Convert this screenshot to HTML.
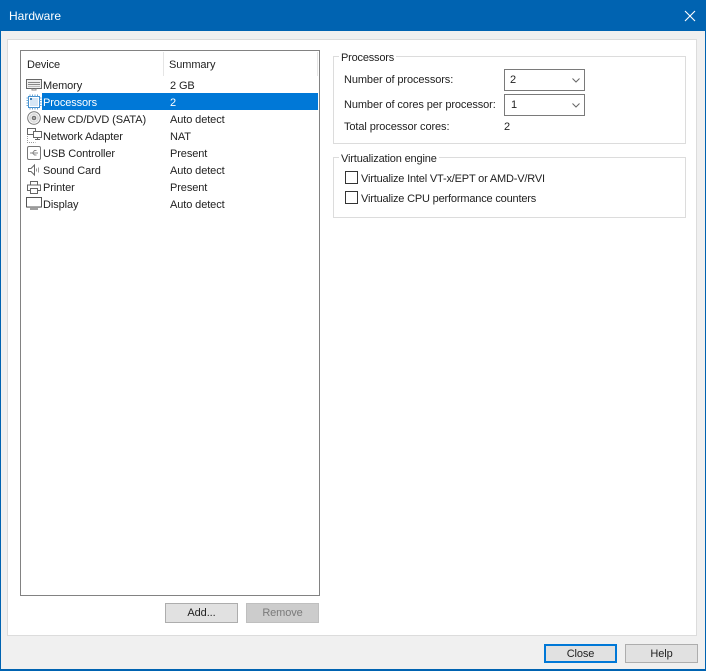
<!DOCTYPE html>
<html><head><meta charset="utf-8"><style>
html,body{margin:0;padding:0}
body{width:706px;height:671px;position:relative;overflow:hidden;background:#f0f0f0;font-family:"Liberation Sans",sans-serif;font-size:11px;letter-spacing:-.1px;color:#222}
.a,.t{position:absolute}
.t{white-space:nowrap;line-height:14px;margin-top:1px}
.b{position:absolute;box-sizing:border-box;background:#e1e1e1;border:1px solid #adadad;text-align:center;line-height:19px;height:20px;width:73px}
.g{position:absolute;box-sizing:border-box;border:1px solid #dcdcdc;left:333px;width:353px}
.c{position:absolute;box-sizing:border-box;left:504px;width:81px;height:22px;border:1px solid #7a7a7a;background:#fff}
.k{position:absolute;box-sizing:border-box;left:345px;width:13px;height:13px;border:1px solid #333;background:#fff}
svg{position:absolute;overflow:visible}
</style></head><body>
<div class="a" style="left:0;top:0;width:706px;height:671px;box-sizing:border-box;border:1px solid #0063b1;border-width:0 1px 2px 1px"></div>
<div class="a" style="left:0;top:0;width:706px;height:31px;background:#0063b1"></div>
<div class="t" style="left:9px;top:8px;color:#fff;font-size:12px;letter-spacing:0">Hardware</div>
<svg style="left:684px;top:10px" width="12" height="12"><path d="M1 1L11 11M11 1L1 11" stroke="#fff" stroke-width="1.1" fill="none"/></svg>

<div class="a" style="left:7px;top:39px;width:690px;height:597px;box-sizing:border-box;background:#fff;border:1px solid #dcdcdc"></div>
<div class="a" style="left:20px;top:50px;width:300px;height:546px;box-sizing:border-box;background:#fff;border:1px solid #828282"></div>
<div class="a" style="left:163px;top:52px;width:1px;height:24px;background:#e5e5e5"></div>
<div class="a" style="left:317px;top:52px;width:1px;height:24px;background:#e5e5e5"></div>
<div class="t" style="left:27px;top:57px">Device</div>
<div class="t" style="left:169px;top:57px">Summary</div>

<div class="a" style="left:42px;top:93px;width:276px;height:17px;background:#0078d7"></div>

<div class="t" style="left:43px;top:78px">Memory</div><div class="t" style="left:170px;top:78px">2 GB</div>
<div class="t" style="left:43px;top:95px;color:#fff">Processors</div><div class="t" style="left:170px;top:95px;color:#fff">2</div>
<div class="t" style="left:43px;top:112px">New CD/DVD (SATA)</div><div class="t" style="left:170px;top:112px">Auto detect</div>
<div class="t" style="left:43px;top:129px">Network Adapter</div><div class="t" style="left:170px;top:129px">NAT</div>
<div class="t" style="left:43px;top:146px">USB Controller</div><div class="t" style="left:170px;top:146px">Present</div>
<div class="t" style="left:43px;top:163px">Sound Card</div><div class="t" style="left:170px;top:163px">Auto detect</div>
<div class="t" style="left:43px;top:180px">Printer</div><div class="t" style="left:170px;top:180px">Present</div>
<div class="t" style="left:43px;top:197px">Display</div><div class="t" style="left:170px;top:197px">Auto detect</div>

<!-- Memory -->
<svg style="left:26px;top:79px" width="16" height="12" fill="none" stroke="#666"><rect x=".5" y=".5" width="15" height="9" fill="#eee"/><path d="M2 3.5h12M2 5.5h12" stroke="#888"/><path d="M2 7.5h12" stroke="#bbb"/><path d="M6 9.5v1.5h4v-1.5" stroke="#888"/></svg>
<!-- Processor -->
<svg style="left:26px;top:94px" width="16" height="16" fill="none"><rect x="2.5" y="2.5" width="11" height="11" fill="#fff" stroke="#3f8fd0"/><rect x="4" y="4" width="8" height="8" fill="#d5e6f5"/><rect x="4" y="4" width="2" height="2" fill="#3f7fb5"/><path d="M4 .5v2M6.5 .5v2M9 .5v2M11.5 .5v2M4 13.5v2M6.5 13.5v2M9 13.5v2M11.5 13.5v2M.5 4h2M.5 6.5h2M.5 9h2M.5 11.5h2M13.5 4h2M13.5 6.5h2M13.5 9h2M13.5 11.5h2" stroke="#6aa5d5"/></svg>
<!-- CD -->
<svg style="left:27px;top:111px" width="14" height="14" fill="none" stroke="#777"><circle cx="7" cy="7" r="6.3"/><circle cx="7" cy="7" r="4" stroke="#ddd" stroke-width="2"/><circle cx="7" cy="7" r="1.8" fill="#aaa" stroke="#666"/></svg>
<!-- Network -->
<svg style="left:27px;top:128px" width="15" height="15" fill="none" stroke="#666"><rect x=".5" y=".5" width="8" height="6"/><rect x="6.5" y="3.5" width="8" height="6" fill="#fff"/><path d="M10.5 9.5v2M8 11.5h5"/><path d="M.5 8v6.5h8" stroke="#999" stroke-dasharray="1 1"/></svg>
<!-- USB -->
<svg style="left:27px;top:146px" width="14" height="14" fill="none" stroke="#777"><rect x=".5" y=".5" width="13" height="13" rx="1.5"/><path d="M3 7h8M5.5 7l2-2.5h2M5.5 7l2 2h2" stroke="#888"/></svg>
<!-- Sound -->
<svg style="left:28px;top:164px" width="13" height="12" fill="none" stroke="#666"><path d="M.5 4.5v3h2.5l3.5 3.5V1L3 4.5z"/><path d="M8.5 4.5v3M10.5 3.5v5" stroke="#999"/></svg>
<!-- Printer -->
<svg style="left:27px;top:181px" width="14" height="13" fill="none" stroke="#666"><rect x="3.5" y=".5" width="7" height="3.5"/><path d="M3 9.5H.5v-5.5h13v5.5H11"/><rect x="3.5" y="7.5" width="7" height="5"/></svg>
<!-- Display -->
<svg style="left:26px;top:197px" width="16" height="13" fill="none" stroke="#555"><rect x=".5" y=".5" width="15" height="9.5"/><path d="M1 10.5h14" stroke="#999"/><path d="M4 12h8" stroke="#777" stroke-width="1.4"/></svg>

<div class="b" style="left:165px;top:603px">Add...</div>
<div class="b" style="left:246px;top:603px;background:#ccc;border-color:#bfbfbf;color:#7a7a7a">Remove</div>

<div class="g" style="top:56px;height:88px"></div>
<div class="t" style="left:339px;top:50px;background:#fff;padding:0 2px;letter-spacing:-.2px">Processors</div>
<div class="t" style="left:344px;top:72px">Number of processors:</div>
<div class="c" style="top:69px"></div><div class="t" style="left:510px;top:72px">2</div>
<svg style="left:572px;top:78px" width="8" height="5"><path d="M.5 .5L4 4L7.5 .5" stroke="#666" fill="none"/></svg>
<div class="t" style="left:344px;top:97px">Number of cores per processor:</div>
<div class="c" style="top:94px"></div><div class="t" style="left:511px;top:97px">1</div>
<svg style="left:572px;top:103px" width="8" height="5"><path d="M.5 .5L4 4L7.5 .5" stroke="#666" fill="none"/></svg>
<div class="t" style="left:344px;top:119px">Total processor cores:</div>
<div class="t" style="left:504px;top:119px">2</div>

<div class="g" style="top:157px;height:61px"></div>
<div class="t" style="left:339px;top:151px;background:#fff;padding:0 2px;letter-spacing:-.15px">Virtualization engine</div>
<div class="k" style="top:171px"></div>
<div class="t" style="left:361px;top:171px;letter-spacing:-.18px">Virtualize Intel VT-x/EPT or AMD-V/RVI</div>
<div class="k" style="top:191px"></div>
<div class="t" style="left:361px;top:191px;letter-spacing:-.18px">Virtualize CPU performance counters</div>

<div class="b" style="left:544px;top:644px;height:19px;border:2px solid #0078d7;line-height:16px">Close</div>
<div class="b" style="left:625px;top:644px;height:19px;line-height:18px">Help</div>
</body></html>
